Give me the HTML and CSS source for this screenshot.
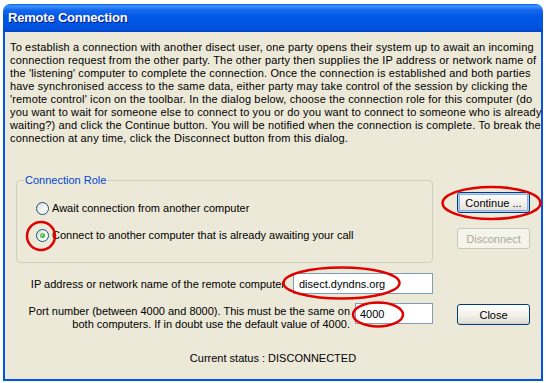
FILE: index.html
```html
<!DOCTYPE html>
<html lang="en">
<head>
  <meta charset="UTF-8" />
  <title>Remote Connection</title>
  <link rel="stylesheet" href="styles.css">
</head>
<body>
  <div class="window">
    <div class="titlebar">Remote Connection</div>

    <div class="client">
      <p class="intro">
        To establish a connection with another disect user, one party opens their system up to await an incoming<br>
        connection request from the other party. The other party then supplies the IP address or network name of<br>
        the 'listening' computer to complete the connection. Once the connection is established and both parties<br>
        have synchronised access to the same data, either party may take control of the session by clicking the<br>
        'remote control' icon on the toolbar. In the dialog below, choose the connection role for this computer (do<br>
        you want to wait for someone else to connect to you or do you want to connect to someone who is already<br>
        waiting?) and click the Continue button. You will be notified when the connection is complete. To break the<br>
        connection at any time, click the Disconnect button from this dialog.
      </p>

      <div class="form">
        <div class="group">
          <div class="group-title">Connection Role</div>
          <label class="option">
            <span class="radio"></span>
            Await connection from another computer
          </label>
          <label class="option">
            <span class="radio checked"></span>
            Connect to another computer that is already awaiting your call
          </label>
        </div>

        <div class="actions">
          <button class="btn default">Continue ...</button>
          <button class="btn" disabled>Disconnect</button>
        </div>

        <div class="field ip">
          <span class="field-label">IP address or network name of the remote computer</span>
          <input class="text" type="text" value="disect.dyndns.org">
        </div>

        <div class="field port">
          <span class="field-label">Port number (between 4000 and 8000). This must be the same on<br>both computers. If in doubt use the default value of 4000.</span>
          <input class="text short" type="text" value="4000">
        </div>

        <button class="btn close">Close</button>
      </div>

      <div class="status">Current status : DISCONNECTED</div>
    </div>
  </div>

  <!-- red annotation rings drawn over the dialog -->
  <svg class="marks" width="546" height="383" viewBox="0 0 546 383">
    <ellipse cx="491.5" cy="203" rx="49" ry="16" />
    <ellipse cx="41" cy="236" rx="14" ry="14" />
    <ellipse cx="341.5" cy="283" rx="58" ry="15.5" />
    <ellipse cx="378" cy="314.5" rx="25" ry="12" />
  </svg>
</body>
</html>
```

FILE: styles.css
```css
body {
  margin: 0;
  background: #fff;
  font-family: "Liberation Sans", Arial, sans-serif;
  font-size: 11px;
  color: #000;
}

.window {
  margin: 4px 0 0 3px;
  width: 540px;
}

.titlebar {
  height: 28px;
  box-sizing: border-box;
  padding: 6px 0 0 5px;
  border-radius: 7px 7px 0 0;
  background: linear-gradient(to bottom, #0a5fe8 0, #3d95ff 2px, #1667ee 6px, #0058e6 45%, #0053df 85%, #0046c6 100%);
  color: #fff;
  font-size: 13px;
  font-weight: bold;
  letter-spacing: -0.2px;
  text-shadow: 1px 1px #0a1883;
}

.client {
  border: solid #0054e3;
  border-width: 0 2px 2px 2px;
  background: #ece9d8;
  padding: 9px 0 14px;
}

.intro {
  margin: 0;
  padding-left: 5px;
  line-height: 13px;
  letter-spacing: 0.15px;
  white-space: nowrap;
}

.form {
  display: grid;
  grid-template-columns: 428px 73px;
  column-gap: 24px;
  margin-top: 35px;
}

.group {
  margin-left: 11px;
  border: 1px solid #d0d0bf;
  border-radius: 4px;
  padding: 0 0 20px 19px;
}

.group-title {
  width: fit-content;
  margin: -7px 0 0 -12px;
  padding: 0 1px;
  background: #ece9d8;
  color: #0046d5;
  line-height: 13px;
}

.option {
  display: flex;
  align-items: center;
  gap: 3px;
  height: 14px;
  margin-top: 14px;
}

.option + .option {
  margin-top: 13px;
}

.radio {
  position: relative;
  width: 13px;
  height: 13px;
  box-sizing: border-box;
  border: 1px solid #1c5180;
  border-radius: 50%;
  background: linear-gradient(135deg, #dcdcd4, #fff 80%);
}

.radio.checked::after {
  content: "";
  position: absolute;
  left: 3px;
  top: 3px;
  width: 5px;
  height: 5px;
  border-radius: 50%;
  background: radial-gradient(circle at 35% 35%, #7ee07e, #21a121);
}

.actions {
  display: flex;
  flex-direction: column;
  gap: 15px;
  padding-top: 12px;
}

.btn {
  width: 73px;
  height: 21px;
  padding: 0;
  border: 1px solid #003c74;
  border-radius: 3px;
  background: linear-gradient(to bottom, #fff 0, #f3f2ed 50%, #e6e4dc 85%, #d6d0c5 100%);
  font-family: inherit;
  font-size: 11px;
  color: #000;
}

.btn.default {
  box-shadow: inset 0 0 0 1px #b5cdf2, inset 0 0 0 2px #8cb0ea;
}

.btn:disabled {
  border-color: #c9c7ba;
  background: #f5f4ea;
  color: #aca899;
}

.field {
  grid-column: 1;
  display: flex;
  justify-content: flex-end;
  align-items: flex-start;
}

.field.ip {
  margin-top: 10px;
  gap: 8px;
}

.field.ip .field-label {
  margin-top: 5px;
}

.field.port {
  margin-top: 9px;
  gap: 5px;
}

.field.port .field-label {
  margin-top: 2px;
}

.field-label {
  text-align: right;
  line-height: 13px;
  white-space: nowrap;
}

.text {
  width: 140px;
  height: 21px;
  box-sizing: border-box;
  margin: 0;
  padding: 0 5px;
  border: 1px solid #7f9db9;
  background: #fff;
  font-family: inherit;
  font-size: 11px;
}

.text.short {
  width: 78px;
  padding-left: 4px;
}

.close {
  grid-column: 2;
  grid-row: 3;
  margin-top: 10px;
}

.status {
  margin-top: 21px;
  text-align: center;
  line-height: 13px;
}

.marks {
  position: absolute;
  left: 0;
  top: 0;
  pointer-events: none;
}

.marks ellipse {
  fill: none;
  stroke: #e00000;
  stroke-width: 2.5;
}
```
